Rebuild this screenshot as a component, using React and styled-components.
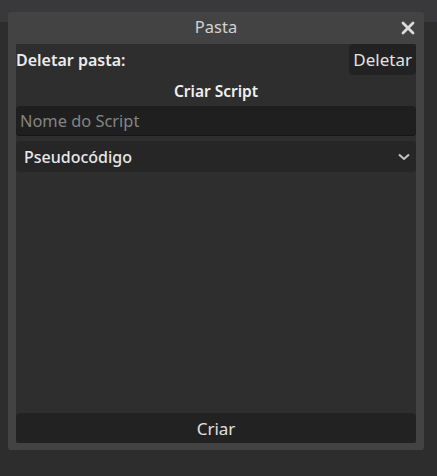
import styled, { createGlobalStyle } from 'styled-components'

const GlobalStyle = createGlobalStyle`
  html, body {
    margin: 0;
    padding: 0;
    background: #2c2c2c;
    font-family: "Noto Sans", "Open Sans", sans-serif;
  }
`

const Page = styled.div`
  position: relative;
  width: 437px;
  height: 476px;
  background: #2d2d2d;
  overflow: hidden;
`

const TopBar = styled.div`
  height: 22px;
  background: #39393b;
`

const Dialog = styled.div`
  position: absolute;
  left: 8px;
  top: 12px;
  width: 416px;
  height: 438px;
  background: #434343;
  border-radius: 3px;
  display: flex;
  flex-direction: column;
  padding: 0 8px 7px;
  box-sizing: border-box;
`

const Header = styled.div`
  height: 32px;
  padding-bottom: 3px;
  box-sizing: border-box;
  display: flex;
  align-items: center;
  justify-content: center;
  position: relative;
  color: #d2d2d2;
  font-size: 16.5px;
`

const Close = styled.button`
  position: absolute;
  right: -2px;
  top: 7px;
  width: 20px;
  height: 18px;
  padding: 0;
  border: none;
  background: none;
  display: flex;
  align-items: center;
  justify-content: center;
`

const Body = styled.div`
  flex: 1;
  background: #2e2e2e;
  display: flex;
  flex-direction: column;
`

const Row = styled.div`
  display: flex;
  align-items: center;
  justify-content: space-between;
  height: 31px;
`

const Label = styled.span`
  color: #ececec;
  font-size: 16px;
  font-weight: 600;
`

const SmallButton = styled.button`
  height: 31px;
  padding: 0 4px;
  border: none;
  border-radius: 4px;
  background: #222222;
  color: #e2e2e2;
  font-family: inherit;
  font-size: 17px;
`

const SectionTitle = styled.div`
  text-align: center;
  color: #f0f0f0;
  font-size: 15.5px;
  font-weight: 600;
  height: 31px;
  line-height: 32px;
`

const Input = styled.input`
  height: 29px;
  box-sizing: border-box;
  border: none;
  border-radius: 4px;
  background: #1f1f1f;
  box-shadow: 0 1px 0 #151515;
  padding: 0 4px;
  color: #e0e0e0;
  font-family: inherit;
  font-size: 16.4px;
  outline: none;

  &::placeholder {
    color: #858585;
  }
`

const Select = styled.div`
  margin-top: 6px;
  height: 31px;
  border-radius: 4px;
  background: #262626;
  display: flex;
  align-items: center;
  justify-content: space-between;
  padding: 0 5px 0 8px;
  color: #e8e8e8;
  font-size: 16px;
  font-weight: 500;
`

const Spacer = styled.div`
  flex: 1;
`

const WideButton = styled.button`
  height: 30px;
  border: none;
  border-radius: 4px;
  background: #222222;
  color: #e0e0e0;
  font-family: inherit;
  font-size: 17px;
`

export default function App() {
  return (
    <>
      <GlobalStyle />
      <Page>
        <TopBar />
        <Dialog>
          <Header>
            Pasta
            <Close>
              <svg width="14" height="14" viewBox="0 0 14 14">
                <path d="M2 2 L12 12 M12 2 L2 12" stroke="#dcdcdc" strokeWidth="2.8" strokeLinecap="round" />
              </svg>
            </Close>
          </Header>
          <Body>
            <Row>
              <Label>Deletar pasta:</Label>
              <SmallButton>Deletar</SmallButton>
            </Row>
            <SectionTitle>Criar Script</SectionTitle>
            <Input placeholder="Nome do Script" />
            <Select>
              <span>Pseudocódigo</span>
              <svg width="14" height="8" viewBox="0 0 14 8">
                <path d="M2 1.5 L7 6 L12 1.5" stroke="#c4c4c4" strokeWidth="2" fill="none" />
              </svg>
            </Select>
            <Spacer />
            <WideButton>Criar</WideButton>
          </Body>
        </Dialog>
      </Page>
    </>
  )
}
